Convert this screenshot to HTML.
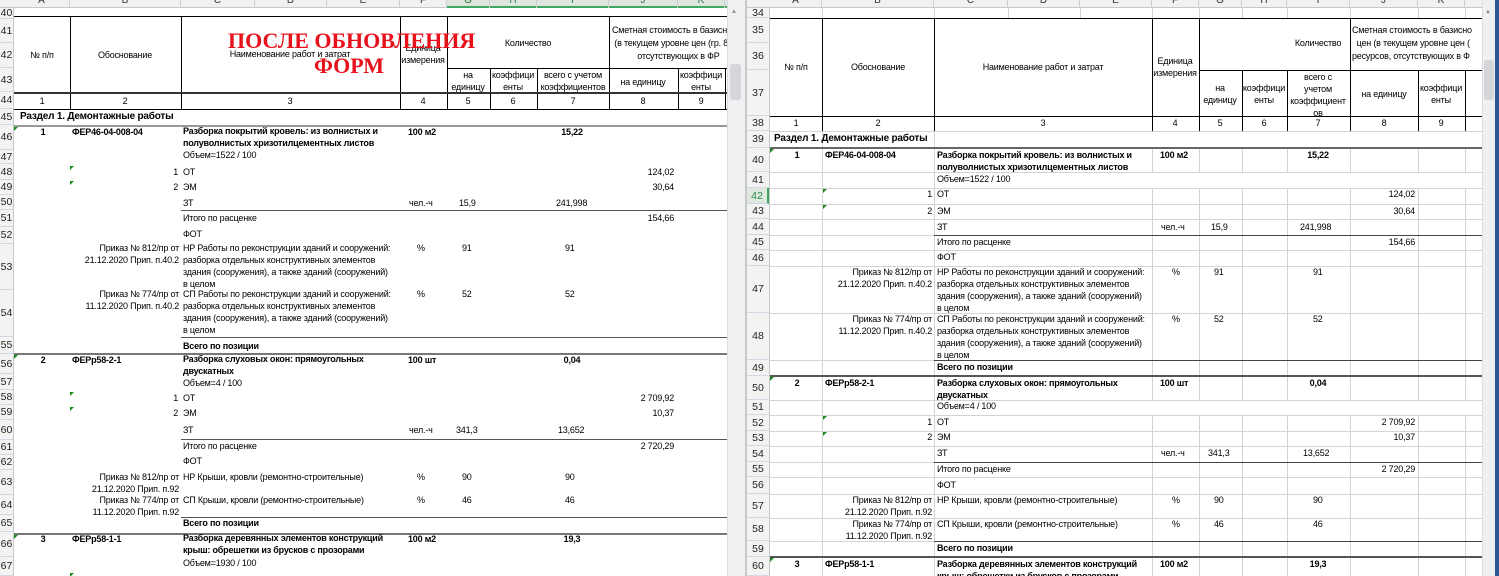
<!DOCTYPE html>
<html><head><meta charset="utf-8"><style>
*{margin:0;padding:0;box-sizing:border-box}
body{width:1499px;height:576px;overflow:hidden;background:#fff;position:relative;font-family:"Liberation Sans",sans-serif;color:#000}
.p{position:absolute;top:0;height:576px;overflow:hidden;background:#fff}
.c{position:absolute;font-size:9px;line-height:12px;white-space:nowrap;letter-spacing:-0.2px}
.b{font-weight:bold}
.m{transform:translateX(-50%);text-align:center}
.r{transform:translateX(-100%)}
.h{position:absolute;height:1px;background:#000}
.hg{position:absolute;height:2px;background:#777}
.v{position:absolute;width:1px;background:#000}
.gv{position:absolute;width:1px;background:#d4d4d4}
.gh{position:absolute;height:1px;background:#d4d4d4}
.rh{position:absolute;left:0;width:100%;border-bottom:1px solid #d0d7e5;font-size:10.5px;color:#222;display:flex;align-items:center;justify-content:center}
.ch{position:absolute;top:-4px;height:12px;font-size:10px;color:#333;text-align:center;border-right:1px solid #cfcfcf;line-height:10px}
.tri{position:absolute;width:0;height:0;border-top:4px solid #1a8a1a;border-right:4px solid transparent}
</style></head><body>

<!-- LEFT PANEL -->
<div class="p" style="left:0;width:745px">
 <div style="position:absolute;left:0;top:0;width:727px;height:8px;background:#f1f1f1;border-bottom:1px solid #c8c8c8"></div>
 <div style="position:absolute;left:447px;top:0;width:280px;height:8px;background:#dfe6df;border-bottom:2px solid #3fa85f"></div>
 <div class="ch" style="left:14px;width:56px">A</div><div class="ch" style="left:70px;width:111px">B</div><div class="ch" style="left:181px;width:74px">C</div><div class="ch" style="left:255px;width:72px">D</div><div class="ch" style="left:327px;width:73px">E</div><div class="ch" style="left:400px;width:47px">F</div><div class="ch" style="left:447px;width:43px;color:#2d7a3d">G</div><div class="ch" style="left:490px;width:47px;color:#2d7a3d">H</div><div class="ch" style="left:537px;width:72px;color:#2d7a3d">I</div><div class="ch" style="left:609px;width:69px;color:#2d7a3d">J</div><div class="ch" style="left:678px;width:47px;color:#2d7a3d">K</div>
 <div style="position:absolute;left:0;top:8px;width:14px;height:568px;background:#f3f3f3;border-right:1px solid #c8c8c8">
  <div class="rh" style="top:0;height:11px">40</div><div class="rh" style="top:11px;height:24px">41</div><div class="rh" style="top:35px;height:25px">42</div><div class="rh" style="top:60px;height:24px">43</div><div class="rh" style="top:84px;height:17px">44</div><div class="rh" style="top:101px;height:16px">45</div><div class="rh" style="top:117px;height:25px">46</div><div class="rh" style="top:142px;height:14px">47</div><div class="rh" style="top:156px;height:16px">48</div><div class="rh" style="top:172px;height:15px">49</div><div class="rh" style="top:187px;height:15px">50</div><div class="rh" style="top:202px;height:17px">51</div><div class="rh" style="top:219px;height:17px">52</div><div class="rh" style="top:236px;height:46px">53</div><div class="rh" style="top:282px;height:47px">54</div><div class="rh" style="top:329px;height:17px">55</div><div class="rh" style="top:346px;height:20px">56</div><div class="rh" style="top:366px;height:16px">57</div><div class="rh" style="top:382px;height:15px">58</div><div class="rh" style="top:397px;height:15px">59</div><div class="rh" style="top:412px;height:20px">60</div><div class="rh" style="top:432px;height:15px">61</div><div class="rh" style="top:447px;height:15px">62</div><div class="rh" style="top:462px;height:25px">63</div><div class="rh" style="top:487px;height:20px">64</div><div class="rh" style="top:507px;height:17px">65</div><div class="rh" style="top:524px;height:25px">66</div><div class="rh" style="top:549px;height:19px">67</div>
 </div>
 <div class="h" style="left:14px;top:16px;width:713px"></div>
 <div class="v" style="left:70px;top:16px;height:93px"></div><div class="v" style="left:181px;top:16px;height:93px"></div><div class="v" style="left:400px;top:16px;height:93px"></div><div class="v" style="left:447px;top:16px;height:93px"></div><div class="v" style="left:609px;top:16px;height:93px"></div>
 <div class="v" style="left:490px;top:68px;height:41px"></div><div class="v" style="left:537px;top:68px;height:41px"></div><div class="v" style="left:678px;top:68px;height:41px"></div><div class="v" style="left:725px;top:68px;height:41px"></div>
 <div class="h" style="left:447px;top:68px;width:280px"></div>
 <div class="hg" style="left:14px;top:92px;width:713px;background:#333"></div>
 <div class="h" style="left:14px;top:109px;width:713px"></div>
 <div class="c m" style="left:42px;top:49px">№ п/п</div>
 <div class="c m" style="left:125px;top:49px">Обоснование</div>
 <div class="c m" style="left:290px;top:48px">Наименование работ и затрат</div>
 <div class="c m" style="left:423px;top:42px">Единица<br>измерения</div>
 <div class="c m" style="left:528px;top:37px">Количество</div>
 <div class="c m" style="left:468px;top:69px">на<br>единицу</div>
 <div class="c m" style="left:513px;top:69px">коэффици<br>енты</div>
 <div class="c m" style="left:573px;top:69px">всего с учетом<br>коэффициентов</div>
 <div class="c m" style="left:643px;top:76px">на единицу</div>
 <div class="c m" style="left:701px;top:69px">коэффици<br>енты</div>
 <div class="c" style="left:612px;top:24px;line-height:13px">Сметная стоимость в базисн<br>&nbsp;(в текущем уровне цен (гр. 8<br>&nbsp;&nbsp;&nbsp;&nbsp;&nbsp;&nbsp;&nbsp;&nbsp;&nbsp;&nbsp;&nbsp;отсутствующих в ФР</div>
 <div class="c m" style="left:42px;top:95px">1</div><div class="c m" style="left:125px;top:95px">2</div><div class="c m" style="left:290px;top:95px">3</div><div class="c m" style="left:423px;top:95px">4</div><div class="c m" style="left:468px;top:95px">5</div><div class="c m" style="left:513px;top:95px">6</div><div class="c m" style="left:573px;top:95px">7</div><div class="c m" style="left:643px;top:95px">8</div><div class="c m" style="left:701px;top:95px">9</div>
 <div style="position:absolute;left:228px;top:30px;font:bold 22px 'Liberation Serif',serif;color:#e8101a;line-height:22px;letter-spacing:0;white-space:nowrap">ПОСЛЕ ОБНОВЛЕНИЯ</div>
 <div style="position:absolute;left:314px;top:55px;font:bold 22px 'Liberation Serif',serif;color:#e8101a;line-height:22px;white-space:nowrap">ФОРМ</div>
 <div class="c b" style="left:20px;top:111px;font-size:10px">Раздел 1. Демонтажные работы</div>
 <div class="hg" style="left:14px;top:125px;width:713px;background:#999"></div>
 <div class="tri" style="left:14px;top:127px"></div>
 <div class="c b m" style="left:43px;top:126px">1</div><div class="c b" style="left:72px;top:126px">ФЕР46-04-008-04</div>
 <div class="c b" style="left:183px;top:125px">Разборка покрытий кровель: из волнистых и<br>полуволнистых хризотилцементных листов</div>
 <div class="c b" style="left:408px;top:126px">100 м2</div><div class="c b m" style="left:572px;top:126px">15,22</div>
 <div class="c" style="left:183px;top:149px">Объем=1522 / 100</div>
 <div class="tri" style="left:70px;top:166px"></div><div class="c r" style="left:178px;top:166px">1</div><div class="c" style="left:183px;top:166px">ОТ</div><div class="c r" style="left:674px;top:166px">124,02</div>
 <div class="tri" style="left:70px;top:181px"></div><div class="c r" style="left:178px;top:181px">2</div><div class="c" style="left:183px;top:181px">ЭМ</div><div class="c r" style="left:674px;top:181px">30,64</div>
 <div class="c" style="left:183px;top:197px">ЗТ</div><div class="c" style="left:409px;top:197px">чел.-ч</div><div class="c" style="left:459px;top:197px">15,9</div><div class="c" style="left:556px;top:197px">241,998</div>
 <div class="h" style="left:181px;top:210px;width:546px;background:#555"></div>
 <div class="c" style="left:183px;top:212px">Итого по расценке</div><div class="c r" style="left:674px;top:212px">154,66</div>
 <div class="c" style="left:183px;top:228px">ФОТ</div>
 <div class="c r" style="left:179px;top:242px;text-align:right">Приказ № 812/пр от<br>21.12.2020 Прип. п.40.2</div>
 <div class="c" style="left:183px;top:242px">НР Работы по реконструкции зданий и сооружений:<br>разборка отдельных конструктивных элементов<br>здания (сооружения), а также зданий (сооружений)<br>в целом</div>
 <div class="c" style="left:417px;top:242px">%</div><div class="c" style="left:462px;top:242px">91</div><div class="c" style="left:565px;top:242px">91</div>
 <div class="c r" style="left:179px;top:288px;text-align:right">Приказ № 774/пр от<br>11.12.2020 Прип. п.40.2</div>
 <div class="c" style="left:183px;top:288px">СП Работы по реконструкции зданий и сооружений:<br>разборка отдельных конструктивных элементов<br>здания (сооружения), а также зданий (сооружений)<br>в целом</div>
 <div class="c" style="left:417px;top:288px">%</div><div class="c" style="left:462px;top:288px">52</div><div class="c" style="left:565px;top:288px">52</div>
 <div class="h" style="left:181px;top:337px;width:546px;background:#555"></div>
 <div class="c b" style="left:183px;top:340px">Всего по позиции</div>
 <div class="hg" style="left:14px;top:353px;width:713px"></div>
 <div class="tri" style="left:14px;top:355px"></div>
 <div class="c b m" style="left:43px;top:354px">2</div><div class="c b" style="left:72px;top:354px">ФЕРр58-2-1</div>
 <div class="c b" style="left:183px;top:353px">Разборка слуховых окон: прямоугольных<br>двускатных</div>
 <div class="c b" style="left:408px;top:354px">100 шт</div><div class="c b m" style="left:572px;top:354px">0,04</div>
 <div class="c" style="left:183px;top:377px">Объем=4 / 100</div>
 <div class="tri" style="left:70px;top:392px"></div><div class="c r" style="left:178px;top:392px">1</div><div class="c" style="left:183px;top:392px">ОТ</div><div class="c r" style="left:674px;top:392px">2 709,92</div>
 <div class="tri" style="left:70px;top:407px"></div><div class="c r" style="left:178px;top:407px">2</div><div class="c" style="left:183px;top:407px">ЭМ</div><div class="c r" style="left:674px;top:407px">10,37</div>
 <div class="c" style="left:183px;top:424px">ЗТ</div><div class="c" style="left:409px;top:424px">чел.-ч</div><div class="c" style="left:456px;top:424px">341,3</div><div class="c" style="left:558px;top:424px">13,652</div>
 <div class="h" style="left:181px;top:439px;width:546px;background:#555"></div>
 <div class="c" style="left:183px;top:440px">Итого по расценке</div><div class="c r" style="left:674px;top:440px">2 720,29</div>
 <div class="c" style="left:183px;top:455px">ФОТ</div>
 <div class="c r" style="left:179px;top:471px;text-align:right">Приказ № 812/пр от<br>21.12.2020 Прип. п.92</div>
 <div class="c" style="left:183px;top:471px">НР Крыши, кровли (ремонтно-строительные)</div>
 <div class="c" style="left:417px;top:471px">%</div><div class="c" style="left:462px;top:471px">90</div><div class="c" style="left:565px;top:471px">90</div>
 <div class="c r" style="left:179px;top:494px;text-align:right">Приказ № 774/пр от<br>11.12.2020 Прип. п.92</div>
 <div class="c" style="left:183px;top:494px">СП Крыши, кровли (ремонтно-строительные)</div>
 <div class="c" style="left:417px;top:494px">%</div><div class="c" style="left:462px;top:494px">46</div><div class="c" style="left:565px;top:494px">46</div>
 <div class="h" style="left:181px;top:517px;width:546px;background:#555"></div>
 <div class="c b" style="left:183px;top:517px">Всего по позиции</div>
 <div class="hg" style="left:14px;top:533px;width:713px"></div>
 <div class="tri" style="left:14px;top:535px"></div>
 <div class="c b m" style="left:43px;top:533px">3</div><div class="c b" style="left:72px;top:533px">ФЕРр58-1-1</div>
 <div class="c b" style="left:183px;top:532px">Разборка деревянных элементов конструкций<br>крыш: обрешетки из брусков с прозорами</div>
 <div class="c b" style="left:408px;top:533px">100 м2</div><div class="c b m" style="left:572px;top:533px">19,3</div>
 <div class="c" style="left:183px;top:557px">Объем=1930 / 100</div>
 <div class="tri" style="left:70px;top:573px"></div>
 <div style="position:absolute;left:727px;top:0;width:18px;height:576px;background:#eef0f2;border-left:1px solid #dcdcdc"></div>
 <div style="position:absolute;left:731px;top:9px;font-size:6px;color:#888">▲</div>
 <div style="position:absolute;left:730px;top:64px;width:11px;height:36px;background:#d4d6d9;border-radius:3px"></div>
</div>
<div style="position:absolute;left:745px;top:0;width:2px;height:576px;background:#c9c9c9"></div>

<!-- RIGHT PANEL -->
<div class="p" style="left:747px;width:752px">
 <div style="position:absolute;left:0;top:0;width:735px;height:8px;background:#f1f1f1;border-bottom:1px solid #c8c8c8"></div>
 <div class="ch" style="left:23px;width:52px">A</div><div class="ch" style="left:75px;width:112px">B</div><div class="ch" style="left:187px;width:74px">C</div><div class="ch" style="left:261px;width:72px">D</div><div class="ch" style="left:333px;width:72px">E</div><div class="ch" style="left:405px;width:47px">F</div><div class="ch" style="left:452px;width:43px">G</div><div class="ch" style="left:495px;width:45px">H</div><div class="ch" style="left:540px;width:63px">I</div><div class="ch" style="left:603px;width:68px">J</div><div class="ch" style="left:671px;width:47px">K</div>
 <div style="position:absolute;left:0;top:8px;width:23px;height:568px;background:#f3f3f3;border-right:1px solid #c8c8c8">
  <div class="rh" style="top:0;height:10px">34</div><div class="rh" style="top:10px;height:25px">35</div><div class="rh" style="top:35px;height:27px">36</div><div class="rh" style="top:62px;height:46px">37</div><div class="rh" style="top:108px;height:15px">38</div><div class="rh" style="top:123px;height:17px">39</div><div class="rh" style="top:140px;height:24px">40</div><div class="rh" style="top:164px;height:16px">41</div><div class="rh" style="top:180px;height:16px;color:#2d8a4d;background:#dfe9df;border-right:2px solid #3fa85f">42</div><div class="rh" style="top:196px;height:15px">43</div><div class="rh" style="top:211px;height:16px">44</div><div class="rh" style="top:227px;height:15px">45</div><div class="rh" style="top:242px;height:16px">46</div><div class="rh" style="top:258px;height:47px">47</div><div class="rh" style="top:305px;height:47px">48</div><div class="rh" style="top:352px;height:16px">49</div><div class="rh" style="top:368px;height:24px">50</div><div class="rh" style="top:392px;height:15px">51</div><div class="rh" style="top:407px;height:16px">52</div><div class="rh" style="top:423px;height:15px">53</div><div class="rh" style="top:438px;height:16px">54</div><div class="rh" style="top:454px;height:15px">55</div><div class="rh" style="top:469px;height:17px">56</div><div class="rh" style="top:486px;height:24px">57</div><div class="rh" style="top:510px;height:23px">58</div><div class="rh" style="top:533px;height:16px">59</div><div class="rh" style="top:549px;height:19px">60</div>
 </div>
 <div class="gv" style="left:75px;top:131px;height:445px"></div><div class="gv" style="left:187px;top:131px;height:445px"></div><div class="gv" style="left:405px;top:148px;height:428px"></div><div class="gv" style="left:452px;top:148px;height:428px"></div><div class="gv" style="left:495px;top:148px;height:428px"></div><div class="gv" style="left:540px;top:148px;height:428px"></div><div class="gv" style="left:603px;top:148px;height:428px"></div><div class="gv" style="left:671px;top:148px;height:428px"></div><div class="gv" style="left:718px;top:148px;height:428px"></div>
 <div class="gv" style="left:261px;top:8px;height:10px"></div><div class="gv" style="left:333px;top:8px;height:10px"></div><div class="gv" style="left:75px;top:8px;height:10px"></div><div class="gv" style="left:187px;top:8px;height:10px"></div><div class="gv" style="left:405px;top:8px;height:10px"></div><div class="gv" style="left:452px;top:8px;height:10px"></div><div class="gv" style="left:495px;top:8px;height:10px"></div><div class="gv" style="left:540px;top:8px;height:10px"></div><div class="gv" style="left:603px;top:8px;height:10px"></div><div class="gv" style="left:671px;top:8px;height:10px"></div><div class="gv" style="left:718px;top:8px;height:10px"></div>
 <div class="gh" style="left:23px;top:172px;width:712px"></div><div class="gh" style="left:23px;top:188px;width:712px"></div><div class="gh" style="left:23px;top:204px;width:712px"></div><div class="gh" style="left:23px;top:219px;width:712px"></div><div class="gh" style="left:23px;top:250px;width:712px"></div><div class="gh" style="left:23px;top:266px;width:712px"></div><div class="gh" style="left:23px;top:313px;width:712px"></div><div class="gh" style="left:23px;top:400px;width:712px"></div><div class="gh" style="left:23px;top:415px;width:712px"></div><div class="gh" style="left:23px;top:431px;width:712px"></div><div class="gh" style="left:23px;top:446px;width:712px"></div><div class="gh" style="left:23px;top:477px;width:712px"></div><div class="gh" style="left:23px;top:494px;width:712px"></div><div class="gh" style="left:23px;top:518px;width:712px"></div><div class="gh" style="left:23px;top:131px;width:712px"></div><div class="gh" style="left:23px;top:235px;width:165px"></div><div class="gh" style="left:23px;top:360px;width:165px"></div><div class="gh" style="left:23px;top:462px;width:165px"></div><div class="gh" style="left:23px;top:541px;width:165px"></div>
 <div style="position:absolute;left:188px;top:173px;width:547px;height:15px;background:#fff"></div>
 <div style="position:absolute;left:188px;top:401px;width:547px;height:14px;background:#fff"></div>
 <div class="h" style="left:23px;top:18px;width:712px"></div>
 <div class="v" style="left:75px;top:18px;height:113px"></div><div class="v" style="left:187px;top:18px;height:113px"></div><div class="v" style="left:405px;top:18px;height:113px"></div><div class="v" style="left:452px;top:18px;height:113px"></div><div class="v" style="left:603px;top:18px;height:113px"></div>
 <div class="v" style="left:495px;top:70px;height:61px"></div><div class="v" style="left:540px;top:70px;height:61px"></div><div class="v" style="left:671px;top:70px;height:61px"></div><div class="v" style="left:718px;top:70px;height:61px"></div>
 <div class="h" style="left:452px;top:70px;width:283px"></div>
 <div class="h" style="left:23px;top:116px;width:712px"></div>
 <div class="c m" style="left:49px;top:61px">№ п/п</div>
 <div class="c m" style="left:131px;top:61px">Обоснование</div>
 <div class="c m" style="left:296px;top:61px">Наименование работ и затрат</div>
 <div class="c m" style="left:428px;top:55px">Единица<br>измерения</div>
 <div class="c m" style="left:571px;top:37px">Количество</div>
 <div class="c m" style="left:473px;top:82px">на<br>единицу</div>
 <div class="c m" style="left:517px;top:82px">коэффици<br>енты</div>
 <div class="c m" style="left:571px;top:71px">всего с<br>учетом<br>коэффициент<br>ов</div>
 <div class="c m" style="left:637px;top:88px">на единицу</div>
 <div class="c m" style="left:694px;top:82px">коэффици<br>енты</div>
 <div class="c" style="left:605px;top:24px;line-height:13px">Сметная стоимость в базисно<br>&nbsp;&nbsp;цен (в текущем уровне цен (<br>ресурсов, отсутствующих в Ф</div>
 <div class="c m" style="left:49px;top:117px">1</div><div class="c m" style="left:131px;top:117px">2</div><div class="c m" style="left:296px;top:117px">3</div><div class="c m" style="left:428px;top:117px">4</div><div class="c m" style="left:473px;top:117px">5</div><div class="c m" style="left:517px;top:117px">6</div><div class="c m" style="left:571px;top:117px">7</div><div class="c m" style="left:637px;top:117px">8</div><div class="c m" style="left:694px;top:117px">9</div>
 <div class="c b" style="left:27px;top:133px;font-size:10px">Раздел 1. Демонтажные работы</div>
 <div class="hg" style="left:23px;top:147px;width:712px;background:#666"></div>
 <div class="tri" style="left:23px;top:149px"></div>
 <div class="c b m" style="left:50px;top:149px">1</div><div class="c b" style="left:78px;top:149px">ФЕР46-04-008-04</div>
 <div class="c b" style="left:190px;top:149px">Разборка покрытий кровель: из волнистых и<br>полуволнистых хризотилцементных листов</div>
 <div class="c b" style="left:413px;top:149px">100 м2</div><div class="c b m" style="left:571px;top:149px">15,22</div>
 <div class="c" style="left:190px;top:173px">Объем=1522 / 100</div>
 <div class="tri" style="left:76px;top:189px"></div><div class="c r" style="left:185px;top:188px">1</div><div class="c" style="left:190px;top:188px">ОТ</div><div class="c r" style="left:668px;top:188px">124,02</div>
 <div class="tri" style="left:76px;top:205px"></div><div class="c r" style="left:185px;top:205px">2</div><div class="c" style="left:190px;top:205px">ЭМ</div><div class="c r" style="left:668px;top:205px">30,64</div>
 <div class="c" style="left:190px;top:221px">ЗТ</div><div class="c" style="left:414px;top:221px">чел.-ч</div><div class="c" style="left:464px;top:221px">15,9</div><div class="c" style="left:553px;top:221px">241,998</div>
 <div class="h" style="left:187px;top:235px;width:548px;background:#444"></div>
 <div class="c" style="left:190px;top:236px">Итого по расценке</div><div class="c r" style="left:668px;top:236px">154,66</div>
 <div class="c" style="left:190px;top:251px">ФОТ</div>
 <div class="c r" style="left:185px;top:266px;text-align:right">Приказ № 812/пр от<br>21.12.2020 Прип. п.40.2</div>
 <div class="c" style="left:190px;top:266px">НР Работы по реконструкции зданий и сооружений:<br>разборка отдельных конструктивных элементов<br>здания (сооружения), а также зданий (сооружений)<br>в целом</div>
 <div class="c" style="left:425px;top:266px">%</div><div class="c" style="left:467px;top:266px">91</div><div class="c" style="left:566px;top:266px">91</div>
 <div class="c r" style="left:185px;top:313px;text-align:right">Приказ № 774/пр от<br>11.12.2020 Прип. п.40.2</div>
 <div class="c" style="left:190px;top:313px">СП Работы по реконструкции зданий и сооружений:<br>разборка отдельных конструктивных элементов<br>здания (сооружения), а также зданий (сооружений)<br>в целом</div>
 <div class="c" style="left:425px;top:313px">%</div><div class="c" style="left:467px;top:313px">52</div><div class="c" style="left:566px;top:313px">52</div>
 <div class="h" style="left:187px;top:360px;width:548px;background:#444"></div>
 <div class="c b" style="left:190px;top:361px">Всего по позиции</div>
 <div class="hg" style="left:23px;top:375px;width:712px;background:#555"></div>
 <div class="tri" style="left:23px;top:377px"></div>
 <div class="c b m" style="left:50px;top:377px">2</div><div class="c b" style="left:78px;top:377px">ФЕРр58-2-1</div>
 <div class="c b" style="left:190px;top:377px">Разборка слуховых окон: прямоугольных<br>двускатных</div>
 <div class="c b" style="left:413px;top:377px">100 шт</div><div class="c b m" style="left:571px;top:377px">0,04</div>
 <div class="c" style="left:190px;top:400px">Объем=4 / 100</div>
 <div class="tri" style="left:76px;top:416px"></div><div class="c r" style="left:185px;top:416px">1</div><div class="c" style="left:190px;top:416px">ОТ</div><div class="c r" style="left:668px;top:416px">2 709,92</div>
 <div class="tri" style="left:76px;top:432px"></div><div class="c r" style="left:185px;top:431px">2</div><div class="c" style="left:190px;top:431px">ЭМ</div><div class="c r" style="left:668px;top:431px">10,37</div>
 <div class="c" style="left:190px;top:447px">ЗТ</div><div class="c" style="left:414px;top:447px">чел.-ч</div><div class="c" style="left:461px;top:447px">341,3</div><div class="c" style="left:556px;top:447px">13,652</div>
 <div class="h" style="left:187px;top:462px;width:548px;background:#444"></div>
 <div class="c" style="left:190px;top:463px">Итого по расценке</div><div class="c r" style="left:668px;top:463px">2 720,29</div>
 <div class="c" style="left:190px;top:479px">ФОТ</div>
 <div class="c r" style="left:185px;top:494px;text-align:right">Приказ № 812/пр от<br>21.12.2020 Прип. п.92</div>
 <div class="c" style="left:190px;top:494px">НР Крыши, кровли (ремонтно-строительные)</div>
 <div class="c" style="left:425px;top:494px">%</div><div class="c" style="left:467px;top:494px">90</div><div class="c" style="left:566px;top:494px">90</div>
 <div class="c r" style="left:185px;top:518px;text-align:right">Приказ № 774/пр от<br>11.12.2020 Прип. п.92</div>
 <div class="c" style="left:190px;top:518px">СП Крыши, кровли (ремонтно-строительные)</div>
 <div class="c" style="left:425px;top:518px">%</div><div class="c" style="left:467px;top:518px">46</div><div class="c" style="left:566px;top:518px">46</div>
 <div class="h" style="left:187px;top:541px;width:548px;background:#444"></div>
 <div class="c b" style="left:190px;top:542px">Всего по позиции</div>
 <div class="hg" style="left:23px;top:556px;width:712px;background:#555"></div>
 <div class="tri" style="left:23px;top:558px"></div>
 <div class="c b m" style="left:50px;top:558px">3</div><div class="c b" style="left:78px;top:558px">ФЕРр58-1-1</div>
 <div class="c b" style="left:190px;top:558px">Разборка деревянных элементов конструкций<br>крыш: обрешетки из брусков с прозорами</div>
 <div class="c b" style="left:413px;top:558px">100 м2</div><div class="c b m" style="left:571px;top:558px">19,3</div>
 <div style="position:absolute;left:735px;top:0;width:14px;height:576px;background:#eef0f2;border-left:1px solid #dcdcdc"></div>
 <div style="position:absolute;left:738px;top:9px;font-size:6px;color:#888">▲</div>
 <div style="position:absolute;left:737px;top:60px;width:10px;height:40px;background:#d4d6d9;border-radius:3px"></div>
 <div style="position:absolute;left:748px;top:0;width:4px;height:576px;background:#2b5797"></div>
</div>
</body></html>
